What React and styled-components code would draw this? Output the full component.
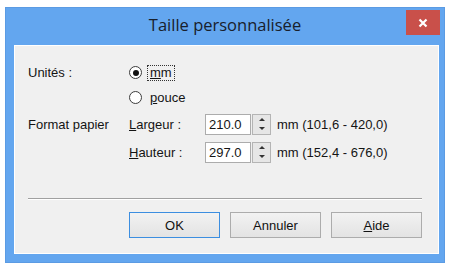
import React from "react";
import styled, { createGlobalStyle } from "styled-components";

const Global = createGlobalStyle`
  html, body { margin: 0; padding: 0; background: #ffffff; }
  body { font-family: "Liberation Sans", Arial, sans-serif; }
`;

const Window = styled.div`
  margin: 7px 0 0 5px;
  width: 440px;
  height: 256px;
  box-sizing: border-box;
  background: #63a6ef;
  border: 1px solid #5b9be3;
  display: flex;
  flex-direction: column;
`;

const TitleBar = styled.div`
  height: 37px;
  display: grid;
  grid-template-columns: 40px 1fr 40px;
  align-items: start;
`;

const Title = styled.div`
  grid-column: 2;
  text-align: center;
  font-family: "Open Sans", "Noto Sans", sans-serif;
  font-size: 16.5px;
  color: #18202b;
  line-height: 20px;
  margin-top: 7px;
`;

const CloseButton = styled.div`
  grid-column: 3;
  justify-self: end;
  margin-top: 2px;
  margin-right: 4px;
  width: 34px;
  height: 25px;
  background: #c9504a;
  display: flex;
  align-items: center;
  justify-content: center;
`;

const Client = styled.div`
  flex: 1;
  margin: 0 5px 8px 8px;
  background: #f0f0f0;
  border: 1px solid #ffffff;
  padding: 14px 16px 0 13px;
  display: flex;
  flex-direction: column;
  font-size: 13px;
  color: #141414;
`;

const Form = styled.div`
  display: grid;
  grid-template-columns: 101px 76px 46px 20px 1fr;
  grid-template-rows: 25px 25px 28px 28px;
  align-items: center;
`;

const Label = styled.div`
  grid-column: ${(p) => p.$col || 1};
  grid-row: ${(p) => p.$row};
  white-space: nowrap;
`;

const RadioRow = styled.label`
  grid-column: 2 / span 4;
  grid-row: ${(p) => p.$row};
  display: flex;
  align-items: center;
  gap: 6px;
`;

const RadioCircle = styled.span`
  width: 13px;
  height: 13px;
  box-sizing: border-box;
  border-radius: 50%;
  border: 1px solid #3c3c3c;
  background: #ffffff;
  display: flex;
  align-items: center;
  justify-content: center;
  &::after {
    content: "";
    width: 6px;
    height: 6px;
    border-radius: 50%;
    background: ${(p) => (p.$checked ? "#111" : "transparent")};
  }
`;

const RadioText = styled.span`
  padding: 0 2px;
  outline: ${(p) => (p.$focus ? "1px dotted #333" : "none")};
  line-height: 14px;
`;

const Key = styled.span`
  text-decoration: underline;
`;

const Input = styled.div`
  grid-column: 3;
  grid-row: ${(p) => p.$row};
  height: 21px;
  box-sizing: border-box;
  background: #fff;
  border: 1px solid #acacac;
  padding: 0 3px;
  display: flex;
  align-items: center;
`;

const Spinner = styled.div`
  grid-column: 4;
  grid-row: ${(p) => p.$row};
  height: 21px;
  box-sizing: border-box;
  border: 1px solid #b4b4b4;
  background: #e6e6e6;
  display: flex;
  flex-direction: column;
  align-items: center;
  justify-content: space-around;
  margin-left: 1px;
`;

const Arrow = styled.span`
  width: 0;
  height: 0;
  border-left: 3px solid transparent;
  border-right: 3px solid transparent;
  ${(p) =>
    p.$up
      ? "border-bottom: 3px solid #333;"
      : "border-top: 3px solid #333;"}
`;

const Range = styled.div`
  grid-column: 5;
  grid-row: ${(p) => p.$row};
  padding-left: 6px;
  white-space: nowrap;
`;

const Separator = styled.div`
  margin-top: 32px;
  height: 1px;
  background: #a0a0a0;
  border-bottom: 1px solid #ffffff;
`;

const Buttons = styled.div`
  margin-top: 12px;
  display: flex;
  justify-content: flex-end;
  gap: 10px;
`;

const Button = styled.div`
  width: 91px;
  height: 26px;
  box-sizing: border-box;
  border: 1px solid ${(p) => (p.$default ? "#3c8ee0" : "#acacac")};
  background: linear-gradient(#f2f2f2, #e3e3e3);
  display: flex;
  align-items: center;
  justify-content: center;
  font-size: 13px;
  color: #111;
`;

export default function App() {
  return (
    <>
      <Global />
      <Window>
        <TitleBar>
          <Title>Taille personnalisée</Title>
          <CloseButton>
            <svg width="10" height="10" viewBox="0 0 10 10">
              <path d="M1.5 1.5 L8.5 8.5 M8.5 1.5 L1.5 8.5" stroke="#fff" strokeWidth="2.2" />
            </svg>
          </CloseButton>
        </TitleBar>
        <Client>
          <Form>
            <Label $row={1}>Unités :</Label>
            <RadioRow $row={1}>
              <RadioCircle $checked />
              <RadioText $focus>
                <Key>m</Key>m
              </RadioText>
            </RadioRow>
            <RadioRow $row={2}>
              <RadioCircle />
              <RadioText>
                <Key>p</Key>ouce
              </RadioText>
            </RadioRow>
            <Label $row={3}>Format papier</Label>
            <Label $row={3} $col={2}>
              <Key>L</Key>argeur :
            </Label>
            <Input $row={3}>210.0</Input>
            <Spinner $row={3}>
              <Arrow $up />
              <Arrow />
            </Spinner>
            <Range $row={3}>mm (101,6 - 420,0)</Range>
            <Label $row={4} $col={2}>
              <Key>H</Key>auteur :
            </Label>
            <Input $row={4}>297.0</Input>
            <Spinner $row={4}>
              <Arrow $up />
              <Arrow />
            </Spinner>
            <Range $row={4}>mm (152,4 - 676,0)</Range>
          </Form>
          <Separator />
          <Buttons>
            <Button $default>OK</Button>
            <Button>Annuler</Button>
            <Button>
              <span>
                <Key>A</Key>ide
              </span>
            </Button>
          </Buttons>
        </Client>
      </Window>
    </>
  );
}
